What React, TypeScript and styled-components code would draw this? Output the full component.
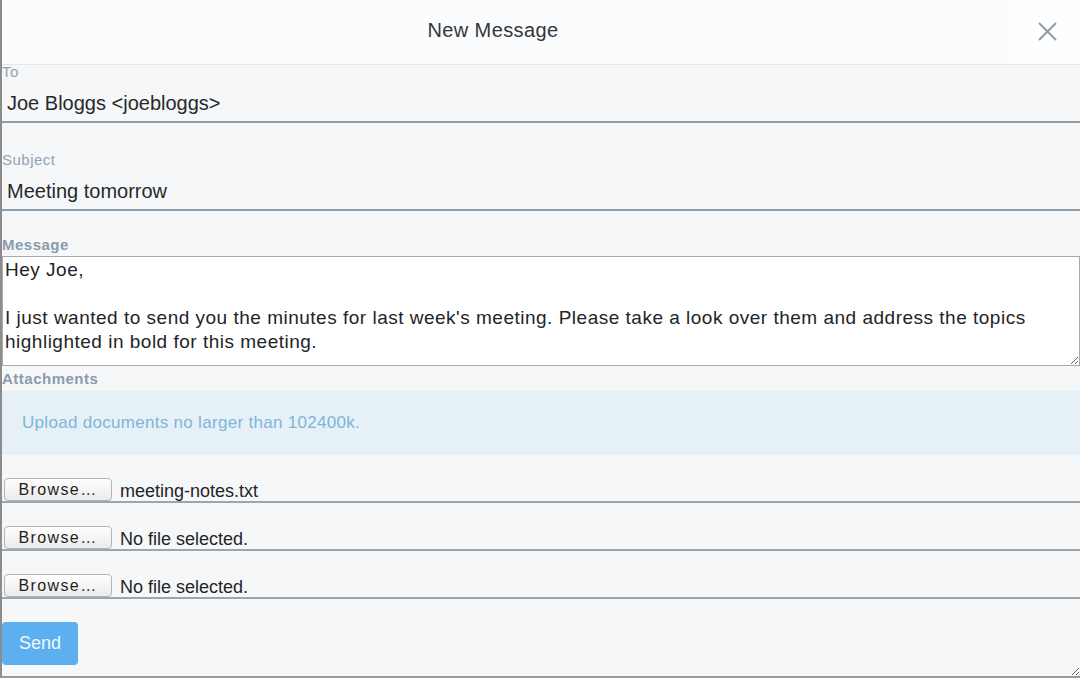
import React from "react";
import styled, { createGlobalStyle } from "styled-components";

const Global = createGlobalStyle`
  html, body { margin: 0; padding: 0; background: #f6f7f9; }
  body { font-family: "Liberation Sans", Arial, sans-serif; }
  * { box-sizing: border-box; }
`;

const Dialog = styled.div`
  width: 1080px;
  height: 678px;
  border-left: 2px solid #8c8c8c;
  border-bottom: 2px solid #9a9a9a;
  background: #f6f7f9;
  display: flex;
  flex-direction: column;
  overflow: hidden;
  resize: both;
`;

const Header = styled.header`
  height: 65px;
  flex: none;
  display: flex;
  background: #fbfcfd;
  border-bottom: 1px solid #e4e7ea;
`;

const Title = styled.h1`
  flex: 1;
  margin: 0;
  padding-right: 30px;
  text-align: center;
  font-size: 20px;
  letter-spacing: 0.4px;
  line-height: 61px;
  font-weight: normal;
  color: #333639;
`;

const CloseButton = styled.button`
  width: 66px;
  height: 64px;
  border: none;
  background: #fdfeff;
  padding: 0 0 2px;
  display: flex;
  align-items: center;
  justify-content: center;
  cursor: pointer;
`;

const Field = styled.div<{ $gap?: number }>`
  margin-top: ${(p) => p.$gap ?? 0}px;
  display: flex;
  flex-direction: column;
`;

const Label = styled.label<{ $bold?: boolean }>`
  display: block;
  font-size: 15px;
  letter-spacing: 0.5px;
  line-height: 14px;
  height: 14px;
  font-weight: ${(p) => (p.$bold ? "bold" : "normal")};
  color: ${(p) => (p.$bold ? "#899bac" : "#91a3b4")};
`;

const TextInput = styled.input`
  width: 100%;
  height: 44px;
  padding: 6px 5px 0;
  border: none;
  border-bottom: 2px solid #8e9fad;
  background: transparent;
  font-family: "Liberation Sans", Arial, sans-serif;
  font-size: 20px;
  color: #26292c;
  outline: none;
`;

const MessageArea = styled.textarea`
  display: block;
  width: 100%;
  height: 110px;
  margin-top: 4px;
  padding: 1px 2px;
  border: 1px solid #a9a9a9;
  background: #ffffff;
  font-family: "Liberation Sans", Arial, sans-serif;
  font-size: 19px;
  letter-spacing: 0.5px;
  line-height: 24px;
  color: #222528;
  outline: none;
`;

const Info = styled.div`
  margin-top: 5px;
  height: 64px;
  padding-left: 20px;
  background: #e6f0f7;
  color: #7db6d9;
  font-size: 17px;
  letter-spacing: 0.3px;
  line-height: 64px;
`;

const FileRow = styled.div`
  height: 48px;
  display: flex;
  align-items: flex-end;
  padding-left: 2px;
  border-bottom: 2px solid #97a6b3;
`;

const BrowseButton = styled.button`
  width: 108px;
  height: 23px;
  padding: 0;
  border: 1px solid #b3b3b3;
  border-radius: 4px;
  background: linear-gradient(#fefefe, #ebebeb);
  font-family: "Liberation Sans", Arial, sans-serif;
  font-size: 16px;
  letter-spacing: 1.4px;
  color: #1f1f1f;
  line-height: 21px;
`;

const FileName = styled.span`
  margin-left: 8px;
  font-size: 18px;
  line-height: 20px;
  color: #222528;
`;

const SendButton = styled.button`
  margin-top: 23px;
  width: 76px;
  height: 43px;
  border: none;
  border-radius: 4px;
  background: #5cb0ef;
  color: #f2f8fe;
  font-family: "Liberation Sans", Arial, sans-serif;
  font-size: 18px;
  padding: 0;
  align-self: flex-start;
`;

const files = ["meeting-notes.txt", "No file selected.", "No file selected."];

export default function App() {
  return (
    <>
      <Global />
      <Dialog>
        <Header>
          <Title>New Message</Title>
          <CloseButton aria-label="Close">
            <svg width="19" height="19" viewBox="0 0 19 19">
              <path
                d="M1 1 L18 18 M18 1 L1 18"
                stroke="#8a99a6"
                strokeWidth="1.8"
                fill="none"
              />
            </svg>
          </CloseButton>
        </Header>
        <Field>
          <Label>To</Label>
          <TextInput readOnly defaultValue="Joe Bloggs <joebloggs>" />
        </Field>
        <Field $gap={30}>
          <Label>Subject</Label>
          <TextInput readOnly defaultValue="Meeting tomorrow" />
        </Field>
        <Field $gap={27}>
          <Label $bold>Message</Label>
          <MessageArea
            readOnly
            defaultValue={
              "Hey Joe,\n\nI just wanted to send you the minutes for last week's meeting. Please take a look over them and address the topics highlighted in bold for this meeting."
            }
          />
        </Field>
        <Field $gap={6}>
          <Label $bold>Attachments</Label>
          <Info>Upload documents no larger than 102400k.</Info>
          {files.map((f, i) => (
            <FileRow key={i}>
              <BrowseButton>Browse…</BrowseButton>
              <FileName>{f}</FileName>
            </FileRow>
          ))}
        </Field>
        <SendButton>Send</SendButton>
      </Dialog>
    </>
  );
}
